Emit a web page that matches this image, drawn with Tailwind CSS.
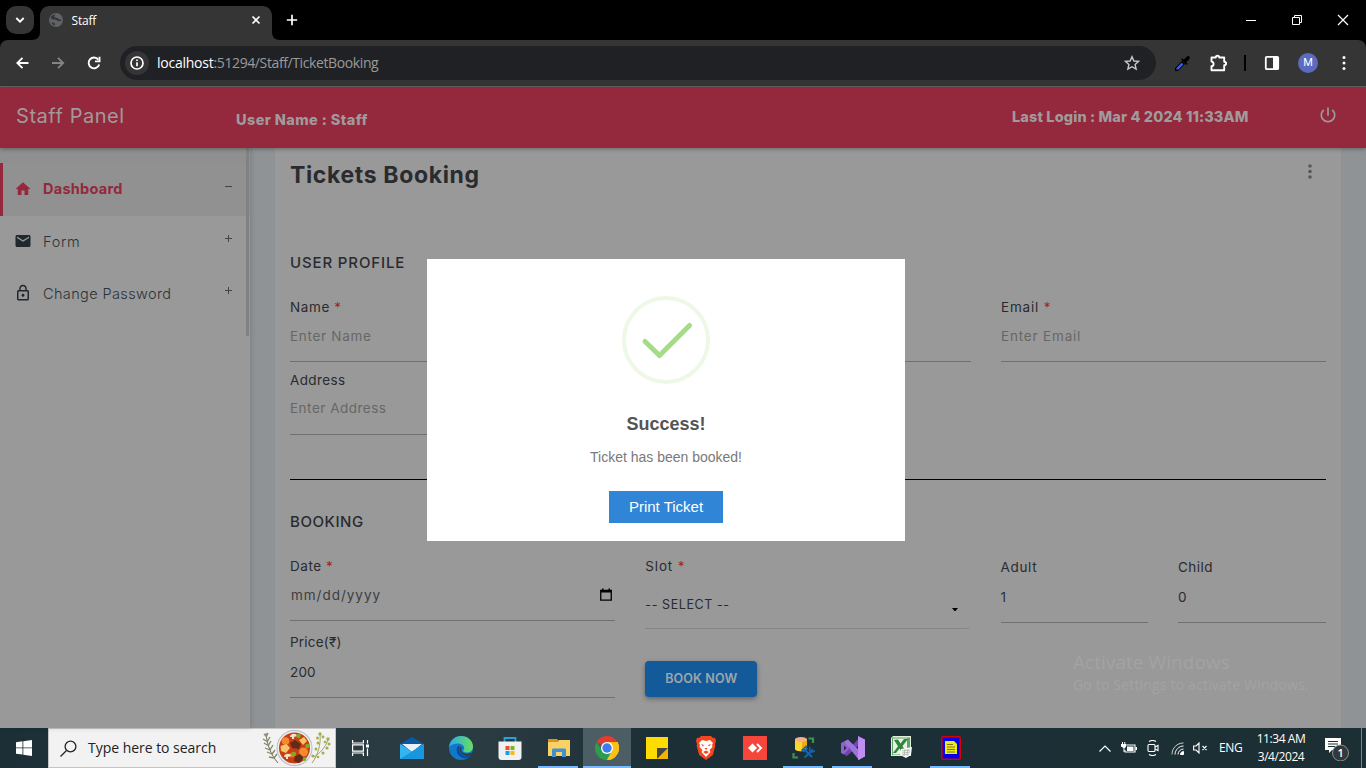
<!DOCTYPE html>
<html lang="en">
<head>
<meta charset="utf-8">
<title>Staff</title>
<script src="https://cdn.jsdelivr.net/npm/@tailwindcss/browser@4"></script>
</head>
<body class="w-[1366px] h-[768px] overflow-hidden bg-black font-['Inter',sans-serif] whitespace-nowrap">
<div class="relative flex flex-col w-[1366px] h-[768px]">

  <!-- Browser tab strip -->
  <div class="flex h-10 bg-black text-white font-['Open_Sans',sans-serif]">
    <div class="w-7 h-7 ml-1.5 mt-1.5 rounded-[10px] bg-[#353535] flex items-center justify-center">
      <svg width="10" height="8" viewBox="0 0 10 8" fill="none" stroke="#fff" stroke-width="1.8"><path d="M1.3 2 5 5.700 8.700 2"/></svg>
    </div>
    <svg class="mt-1.5 ml-[-2px]" width="248" height="34" viewBox="0 0 248 34"><path fill="#353535" d="M0 34c5 0 8-3 8-8V10C8 4 12 0 18 0h212c6 0 10 4 10 10v16c0 5 3 8 8 8z"/>
      <circle cx="24" cy="14" r="7" fill="#5f6368"/><path fill="#353535" d="M18.500 12c.5-2 2.500-3.500 5-3.500-.5 1.200-1.500 1.500-1 2.500.6 1 3 .3 3.500 1.500.3 1 2 .8 3.500 1-.2 1.500-1.500 2-3 1.500-1.500-.3-2-1.500-3.800-1.500-1.700 0-3.200-.3-4.200-1.500zM19.500 16.500c1.500 0 3.500 0 3.500 1.500 0 .8 0 1.300-.5 1.600-1.300-.4-2.300-1.400-3-3.100z"/>
      <path d="m220.500 10.500 7 7m0-7-7 7" stroke="#fff" stroke-width="1.600"/>
      <text x="39.500" y="18.500" font-size="12" fill="#fff" letter-spacing="-0.2">Staff</text></svg>
    <svg class="ml-[6px] mt-3.5" width="12" height="12" viewBox="0 0 12 12" stroke="#fff" stroke-width="1.700"><path d="M6 .8v10.400M.8 6h10.400"/></svg>
    <div class="ml-auto mt-[14px] mr-[17px] flex gap-[34px]">
      <svg width="12" height="12" viewBox="0 0 12 12"><path d="M1 6.500h10" stroke="#fff"/></svg>
      <svg width="12" height="12" viewBox="0 0 12 12" fill="none" stroke="#fff"><path d="M1.500 3.500h7v7h-7zM3.500 3.500v-2h7v7h-2"/></svg>
      <svg width="12" height="12" viewBox="0 0 12 12" stroke="#fff" stroke-width="1.200"><path d="m1 1 10 10M11 1 1 11"/></svg>
    </div>
  </div>

  <!-- Toolbar -->
  <div class="bg-black">
  <div class="flex items-center h-[47px] bg-[#353535] rounded-t-lg border-b border-[#666] font-['Open_Sans',sans-serif]">
    <svg class="ml-4" width="13" height="12" viewBox="0 0 13 12" fill="none" stroke="#fff" stroke-width="1.800"><path d="M12.500 6H1.500M6.500 .8 1.300 6l5.200 5.200"/></svg>
    <svg class="ml-[23px]" width="13" height="12" viewBox="0 0 13 12" fill="none" stroke="#858585" stroke-width="1.800"><path d="M0 6h11M6 .8 11.200 6 6 11.200"/></svg>
    <svg class="ml-[22px]" width="14" height="14" viewBox="0 0 14 14" fill="none" stroke="#fff" stroke-width="1.900"><path d="M11.300 3.600A5.400 5.400 0 1 0 12.200 8.500"/><path d="M8 5.400h4.500V.8"/></svg>
    <div class="ml-[19px] w-[1036px] h-[34px] rounded-full bg-[#202124] flex items-center">
      <div class="w-6 h-6 ml-[5px] rounded-full bg-[#353535] flex items-center justify-center">
        <svg width="14" height="14" viewBox="0 0 14 14" fill="none" stroke="#fff" stroke-width="1.700"><circle cx="7" cy="7" r="6"/><path d="M7 6.200v4M7 3.600v1.500"/></svg>
      </div>
      <div class="ml-2 text-sm leading-none text-white tracking-[-0.24px]">localhost<span class="text-[#9a9b9d] tracking-[-0.39px]">:51294/Staff/TicketBooking</span></div>
      <svg class="ml-auto mr-4" width="16" height="16" viewBox="0 0 16 16" fill="none" stroke="#c9c9c9" stroke-width="1.400"><path d="m8 1.700 1.900 4.300 4.700.4-3.500 3.100 1 4.600L8 11.700l-4.100 2.400 1-4.600-3.500-3.100 4.700-.4z"/></svg>
    </div>
    <svg class="ml-[18px]" width="17" height="17" viewBox="0 0 17 17"><path d="M1 16v-3l7-7 3 3-7 7z" fill="#000"/><path d="m2.300 14.700.4-2 5-5 1.700 1.700-5 5z" fill="#3d5fe0"/><path d="m7 4.500 1.200-1.200 1.500 1.400L13 1.400c1.500-1.500 4 .9 2.500 2.500l-3.300 3.300 1.400 1.500-1.200 1.200z" fill="#000"/></svg>
    <svg class="ml-[19px]" width="18" height="18" viewBox="0 0 18 18" fill="none" stroke="#fff" stroke-width="1.900" stroke-linejoin="round"><path d="M1.500 3.500h4.300c0-2.400 3.400-2.400 3.400 0h5v4.300c2.500 0 2.500 3.400 0 3.400v5H1.500v-4c2.800-.2 2.800-4.400 0-4.600z"/></svg>
    <div class="ml-4 w-0.5 h-4 bg-black"></div>
    <svg class="ml-[18px]" width="16" height="16" viewBox="0 0 16 16"><rect x="1.800" y="1.800" width="12.400" height="12.400" rx="1" fill="none" stroke="#fff" stroke-width="1.800"/><path d="M9 2h5v12H9z" fill="#fff"/></svg>
    <div class="ml-[18px] w-5 h-5 rounded-full bg-[#5c6bc0] text-white text-[11px] leading-5 text-center font-[Roboto,sans-serif]">M</div>
    <svg class="ml-6" width="4" height="16" viewBox="0 0 4 16" fill="#fff"><circle cx="2" cy="2.500" r="1.500"/><circle cx="2" cy="8" r="1.500"/><circle cx="2" cy="13.500" r="1.500"/></svg>
  </div>
  </div>

  <!-- App header -->
  <header class="relative z-10 flex h-[61px] bg-[#94283d] text-[#a09a9b] shadow-[0_1px_4px_rgba(0,0,0,0.35)]">
    <div class="w-[236px] pl-4 pt-[15px] text-[20px] leading-7 tracking-[0.55px]">Staff Panel</div>
    <div class="pt-[23px] text-[14.5px] leading-5 font-extrabold tracking-[0.4px]">User Name : Staff</div>
    <div class="ml-auto w-[306px] pt-5 text-[14.5px] leading-5 font-extrabold tracking-[0.12px]">Last Login : Mar 4 2024 11:33AM</div>
    <svg class="mt-[18px] mr-[28px]" width="20" height="20" viewBox="0 0 24 24" fill="currentColor"><path d="M13 3h-2v10h2V3zm4.830 2.170l-1.420 1.420C17.990 7.860 19 9.810 19 12c0 3.870-3.130 7-7 7s-7-3.130-7-7c0-2.190 1.010-4.140 2.580-5.420L6.170 5.170C4.230 6.820 3 9.260 3 12c0 4.970 4.030 9 9 9s9-4.030 9-9c0-2.740-1.230-5.180-3.170-6.830z"/></svg>
  </header>

  <!-- Page body -->
  <div class="flex h-[580px] bg-[#909395]">
    <aside class="relative w-[250px] bg-[#999] text-[#29343a] text-[14.5px] shadow-[1px_0_5px_rgba(0,0,0,0.15)]">
      <div class="h-[15px] bg-[#8f8f8f]"></div>
      <div class="flex items-center h-[53px] bg-[#919191] border-l-[3px] border-[#94283d] text-[#94283d]">
        <svg class="ml-[11px] mt-[-2px]" width="18" height="18" viewBox="0 0 24 24" fill="currentColor"><path d="M10 20v-6h4v6h5v-8h3L12 3 2 12h3v8z"/></svg>
        <span class="ml-[11px] mt-[-1px] font-bold tracking-[0.27px]">Dashboard</span>
        <span class="ml-auto mr-[18px] mb-[6px] w-[7px] h-px bg-[#444]"></span>
      </div>
      <div class="flex items-center h-[52px]">
        <svg class="ml-[14px] mt-[-2px]" width="18" height="18" viewBox="0 0 24 24" fill="#20292e"><path d="M20 4H4c-1.100 0-2 .9-2 2v12c0 1.100.9 2 2 2h16c1.100 0 2-.9 2-2V6c0-1.100-.9-2-2-2zm0 4l-8 5-8-5V6l8 5 8-5v2z"/></svg>
        <span class="ml-[11px] font-light tracking-[0.7px]">Form</span>
        <svg class="ml-auto mr-[18px] mb-[7px]" width="7" height="7" viewBox="0 0 7 7" stroke="#444"><path d="M3.500 0v7M0 3.500h7"/></svg>
      </div>
      <div class="flex items-center h-[52px]">
        <svg class="ml-[14px] mt-[-3px]" width="18" height="18" viewBox="0 0 24 24" fill="#20292e"><path d="M12 17c1.100 0 2-.9 2-2s-.9-2-2-2-2 .9-2 2 .9 2 2 2zm6-9h-1V6c0-2.760-2.240-5-5-5S7 3.240 7 6v2H6c-1.100 0-2 .9-2 2v10c0 1.100.9 2 2 2h12c1.100 0 2-.9 2-2V10c0-1.100-.9-2-2-2zM8.900 6c0-1.710 1.390-3.100 3.100-3.100s3.100 1.390 3.100 3.100v2H8.900V6zM18 20H6V10h12v10z"/></svg>
        <span class="ml-[11px] font-light tracking-[0.38px]">Change Password</span>
        <svg class="ml-auto mr-[18px] mb-[7px]" width="7" height="7" viewBox="0 0 7 7" stroke="#444"><path d="M3.500 0v7M0 3.500h7"/></svg>
      </div>
      <div class="absolute top-0 left-[246px] w-[3px] h-[188px] bg-[#818181] rounded-b"></div>
    </aside>

    <main class="ml-[25px] w-[1066px] bg-[#999] px-[15px] text-[13.5px] text-[#292b2f]">
      <div class="flex justify-between items-start h-[104px] pt-3 pr-[14px]">
        <h1 class="text-[23px] leading-[30px] font-bold tracking-[0.64px]">Tickets Booking</h1>
        <svg class="mt-[4px]" width="4" height="15" viewBox="0 0 4 15" fill="#55585b"><circle cx="2" cy="2" r="1.800"/><circle cx="2" cy="7.500" r="1.800"/><circle cx="2" cy="13" r="1.800"/></svg>
      </div>
      <h2 class="h-[45px] leading-[22px] text-[15px] font-medium tracking-[0.86px]">USER PROFILE</h2>
      <div class="grid grid-cols-[325px_325px_325px] gap-x-[30.500px]">
        <div>
          <div class="h-5 leading-5 tracking-[0.6px]">Name <span class="text-[#a41e2c]">*</span></div>
          <div class="h-[45px] leading-[39px] border-b border-[#707070] text-[#676767] tracking-[0.7px]">Enter Name</div>
        </div>
        <div>
          <div class="h-5 leading-5 tracking-[0.6px]">Mobile <span class="text-[#a41e2c]">*</span></div>
          <div class="h-[45px] leading-[39px] border-b border-[#707070] text-[#676767]">Enter Mobile</div>
        </div>
        <div>
          <div class="h-5 leading-5 tracking-[0.8px]">Email <span class="text-[#a41e2c]">*</span></div>
          <div class="h-[45px] leading-[39px] border-b border-[#707070] text-[#676767] tracking-[0.82px]">Enter Email</div>
        </div>
      </div>
      <div class="w-[325px] mt-2">
        <div class="h-5 leading-5 tracking-[0.38px]">Address</div>
        <div class="h-[45px] leading-[37px] border-b border-[#707070] text-[#676767] tracking-[0.5px]">Enter Address</div>
      </div>
      <div class="mt-11 h-px bg-black"></div>
      <h2 class="h-[76px] pt-[31px] leading-[22px] text-[15px] font-medium tracking-[0.57px]">BOOKING</h2>
      <div class="grid grid-cols-[325px_325px_147px_148px] gap-x-[30.300px]">
        <div>
          <div class="h-5 leading-[21px] tracking-[0.55px]">Date <span class="text-[#a41e2c]">*</span></div>
          <div class="flex justify-between h-[45px] leading-[39px] border-b border-[#707070] text-[#3a3d40] pl-px tracking-[0.98px]">mm/dd/yyyy
            <svg class="mt-[12px] mr-[3px]" width="12" height="13" viewBox="0 0 12 13"><path d="M.75 2.500h10.500v9.700H.75z" fill="none" stroke="#000" stroke-width="1.300"/><path d="M.5 2h11v2.500H.5zM2 .5h1.500V2H2zM8.500.5H10V2H8.500z"/></svg>
          </div>
          <div class="h-5 mt-[11px] leading-[21px] tracking-[0.22px]">Price(₹)</div>
          <div class="h-[46px] leading-[41px] border-b border-[#707070] tracking-[0.15px]">200</div>
        </div>
        <div>
          <div class="h-5 leading-[21px] tracking-[0.85px]">Slot <span class="text-[#a41e2c]">*</span></div>
          <div class="flex justify-between h-[53px] leading-[58px] text-[12.500px] border-b border-[#858585] rounded-br-sm tracking-[0.58px]">-- SELECT --
            <svg class="mt-[32px] mr-[12px]" width="6" height="3" viewBox="0 0 6 3"><path d="M0 0h6L3.500 3h-1z"/></svg>
          </div>
          <button class="mt-8 w-28 h-9 rounded-sm bg-[#125a99] text-[#a0a5a9] text-[12.500px] font-semibold tracking-[0.15px] shadow-[0_2px_5px_rgba(0,0,0,0.35)]">BOOK NOW</button>
        </div>
        <div>
          <div class="h-5 leading-[23px] tracking-[0.65px]">Adult</div>
          <div class="h-[47px] leading-[43px] border-b border-[#707070] text-[#26344f]">1</div>
        </div>
        <div>
          <div class="h-5 leading-[23px] tracking-[0.5px]">Child</div>
          <div class="h-[47px] leading-[43px] border-b border-[#707070]">0</div>
        </div>
      </div>
    </main>
  </div>

  <!-- Activation watermark -->
  <div class="absolute left-[1073px] top-[650px] text-[#a3a3a3] font-['Open_Sans',sans-serif]">
    <div class="text-[19px] leading-6 tracking-[0.05px]">Activate Windows</div>
    <div class="text-sm leading-[22px] tracking-[0.18px]">Go to Settings to activate Windows.</div>
  </div>

  <!-- Success dialog -->
  <div class="absolute left-[427px] top-[259px] w-[478px] h-[282px] bg-white flex flex-col items-center font-['Liberation_Sans',sans-serif]">
    <svg class="mt-[37px]" width="88" height="88" viewBox="0 0 88 88" fill="none"><circle cx="44" cy="44" r="42" stroke="#edf8e7" stroke-width="4"/><path d="m23 45.500 14.500 14L67.500 29.500" stroke="#a5dc86" stroke-width="5" stroke-linecap="round" stroke-linejoin="round"/></svg>
    <div class="mt-[29px] text-lg leading-[22px] font-bold text-[#545454]">Success!</div>
    <div class="mt-3 text-sm leading-5 text-[#797979]">Ticket has been booked!</div>
    <button class="mt-[24px] w-[114px] h-8 bg-[#3085d6] text-white text-[15px]">Print Ticket</button>
  </div>

  <!-- Windows taskbar -->
  <footer class="flex h-10 bg-[linear-gradient(90deg,#1c2f37_0%,#2b3b42_28%,#2b3b42_35%,#1c2f37_48%,#1c2f35_100%)] text-white font-['Open_Sans',sans-serif]">
    <div class="w-12 flex items-center justify-center"><svg width="16" height="16" viewBox="0 0 16 16" fill="#fff"><path d="M0 2.200 6.500 1.300v6.200H0zM7.300 1.200 16 0v7.500H7.300zM0 8.300h6.500v6.300L0 13.700zM7.300 8.300H16V16l-8.700-1.200z"/></svg></div>
    <div class="w-72 h-10 bg-[#f2f2f2] border border-[#c4c4c4] flex items-center text-[#222]">
      <svg class="ml-[11px]" width="17" height="17" viewBox="0 0 17 17" fill="none" stroke="#222" stroke-width="1.300"><circle cx="10.500" cy="6.500" r="5.400"/><path d="m6.500 10.500-6 6"/></svg>
      <span class="ml-[11px] text-sm tracking-[-0.03px]">Type here to search</span>
      <svg class="ml-auto mr-[2px]" width="72" height="38" viewBox="0 0 72 38">
        <path d="M5 4c1 12 5 22 12 30" fill="none" stroke="#776a4c"/>
        <path d="m6 8-3-3m4 8-5-3m6 7-5-3m6 7-5-2m7 6-5-2m7 6-5-1M5 8l2-4m-1 9 3-5m-2 9 3-5m-1 9 3-5m-1 9 3-4m-1 8 3-4" stroke="#7d8b66" stroke-width="1.300"/>
        <path d="M59 4c1 12-2 22-8 30M67 11c-3 8-8 13-14 17" fill="none" stroke="#a3a460"/>
        <g fill="#a4ae4b"><circle cx="59" cy="5" r="1.700"/><circle cx="56.500" cy="9" r="1.500"/><circle cx="62" cy="8" r="1.400"/><circle cx="57" cy="14" r="1.500"/><circle cx="55" cy="20" r="1.500"/><circle cx="67" cy="10" r="1.700"/><circle cx="68" cy="15" r="1.500"/><circle cx="64" cy="13" r="1.300"/><circle cx="66" cy="19" r="1.600"/><circle cx="62" cy="24" r="1.500"/><circle cx="57" cy="28" r="1.300"/><circle cx="52" cy="27" r="1.600"/></g>
        <circle cx="33.500" cy="19" r="18" fill="#b9bcc2"/><circle cx="33.500" cy="19" r="17" fill="#eceef1"/><circle cx="33.500" cy="19" r="15.500" fill="#c83d12"/>
        <circle cx="24.500" cy="12" r="3.800" fill="#f38a2d"/><circle cx="42.500" cy="23" r="4.500" fill="#f38a2d"/><circle cx="31" cy="26" r="2.500" fill="#ee761d"/>
        <path d="m19.500 17 6-2 3.500 4-4 5-5-2zM38 11l5-3 3 4-4 4z" fill="#f7c568"/>
        <path d="m29 14 5-3 6 4-2 5-7-1zM34 27l5-2 4 4-5 5-5-2z" fill="#622a19"/>
        <path d="M29 8c0-4 7-4 7-1l-3 1v2h-2V8zM23 28c0-4 7-4 7-1l-3 1v2h-2v-2z" fill="#efe2d2"/>
        <g fill="#79ad25"><circle cx="37.500" cy="7" r="2.300"/><circle cx="46.500" cy="17" r="2.300"/><circle cx="33" cy="25" r="2.200"/><circle cx="43.500" cy="30" r="1.900"/></g>
      </svg>
    </div>
    <div class="w-[51px] flex items-center justify-center"><svg class="mr-[3px]" width="17" height="16" viewBox="0 0 17 16" fill="none" stroke="#fff" stroke-width="1.200"><path d="M.6 0v3h10.800V0M.6 16v-3h10.800v3M.6 4.800h10.800v6.400H.6zM15.500 0v3.500M15.500 8.500V16"/><path d="M14 4.500h3v3h-3z" fill="#fff" stroke="none"/></svg></div>
    <div class="flex">
      <div class="w-[49px] flex items-center justify-center"><svg width="24" height="24" viewBox="0 0 24 24"><path d="M0 8 12 1l12 7v6H0z" fill="#0b58a5"/><path d="M2 8h20L12 16z" fill="#e9f1f8"/><path d="M0 8v15h24V8l-12 7.500z" fill="#35b5f0"/><path d="M0 23 24 8v15z" fill="#1896e0"/></svg></div>
      <div class="w-[49px] flex items-center justify-center"><svg width="24" height="24" viewBox="0 0 24 24"><defs><linearGradient id="ea"><stop stop-color="#2ba9e8"/><stop offset="1" stop-color="#68df5c"/></linearGradient></defs><circle cx="12" cy="12" r="12" fill="#1279ca"/><path d="M0 11C1 4 6 0 12 0c7 0 12 5 12 10.500 0 4-3 6-6 6-3.500 0-4.500-1.500-3.500-2.500 2-2.500-.5-6.500-5-6.500C5 7.500 1.500 9 0 11z" fill="url(#ea)"/><path d="M9 10c-3 4-1 10 5 12 3 1 6-.5 8-3-2 1-4 1.300-6 .7-4.500-1-7.500-5.500-5-10.200z" fill="#0b4d9b"/><path d="M13 11.500c-1.500 1.800-1 5 3 6 3 .8 5.500-.3 7.500-1.500-.6 1.700-1.300 2.600-2.300 3.600C15 21 9 16 10.800 11z" fill="#2b3b42"/></svg></div>
      <div class="w-[49px] flex items-center justify-center"><svg width="24" height="24" viewBox="0 0 24 24"><path d="M6.500 7V2h11v5" fill="none" stroke="#27a2dd" stroke-width="1.800"/><path d="M.5 5.500h23V21c0 2-1 3-3 3h-17c-2 0-3-1-3-3z" fill="#f1f1f1"/><path d="M7.500 10h4v4h-4z" fill="#e94f2e"/><path d="M12.500 10h4v4h-4z" fill="#7fb51a"/><path d="M7.500 15h4v4h-4z" fill="#16a0e8"/><path d="M12.500 15h4v4h-4z" fill="#fbb914"/></svg></div>
      <div class="relative w-[49px] flex items-center justify-center"><svg width="22" height="20" viewBox="0 0 22 20"><path d="M0 1h9l2 2v4H0z" fill="#d99416"/><path d="M0 4h10l1-2h11v16H0z" fill="#fad163"/><path d="M4 18v-6c0-1 .6-1.500 1.500-1.500h11c1 0 1.500.5 1.500 1.500v7h-4v-5H8v5H4z" fill="#3f92d2"/></svg><div class="absolute bottom-0 left-1 w-10 h-0.5 bg-[#76b9ff]"></div></div>
      <div class="relative w-[49px] bg-[#4d5d64] border-r border-[#1c2f37] flex items-center justify-center"><svg width="24" height="24" viewBox="0 0 24 24"><path d="M12 12 1.600 6A12 12 0 0 1 22.400 6z" fill="#e33b2e"/><path d="M12 12 22.400 6A12 12 0 0 1 12 24z" fill="#fbc116"/><path d="M12 24A12 12 0 0 1 1.600 6L7.200 15 12 12l4.800 3z" fill="#2c9d4b"/><path d="M12 6h10.400A12 12 0 0 1 12 24l5.200-9z" fill="#fbc116"/><circle cx="12" cy="12" r="6" fill="#fff"/><circle cx="12" cy="12" r="4.700" fill="#3b7ded"/></svg><div class="absolute bottom-0 left-0 w-12 h-0.5 bg-[#76b9ff]"></div></div>
      <div class="w-[49px] flex items-center justify-center"><svg width="22" height="22" viewBox="0 0 22 22"><path d="M0 0h22v11L11 22H0z" fill="#ffdc00"/><path d="M11 11h11L11 22z" fill="#444"/><path d="M22 11v11H11z" fill="#f3b400"/></svg></div>
      <div class="w-[49px] flex items-center justify-center"><svg width="20" height="24" viewBox="0 0 20 24"><path d="m5 0h10l2 2 2-.3L20 5l-1 3 .3 2-2.500 9L10 24l-6.800-5L.7 10 1 8 0 5l1-3.300L3 2z" fill="#f4451d"/><path d="m6 4 4 1 4-1 3 3-1 2 .5 2-3 3 1 2-4.500 5L5.500 16l1-2-3-3L4 9 3 7z" fill="#fff"/><path d="m5 8 3 1-1 1.500zM15 8l-3 1 1 1.500zM8.500 12h3L10 14zM7 16l3-1.500 3 1.500-3 2z" fill="#f4451d"/></svg></div>
      <div class="w-[49px] flex items-center justify-center"><svg width="24" height="24" viewBox="0 0 24 24"><path fill="#f6463b" d="M0 0h24v24H0z"/><path d="m9.500 7.500 4.500 4.500-4.500 4.500L5 12z" fill="#fff"/><path d="m13 8 4 4-4 4" fill="none" stroke="#fff" stroke-width="2" transform="translate(1)"/></svg></div>
      <div class="relative w-[49px] flex items-center justify-center"><svg width="23" height="24" viewBox="0 0 23 24"><path d="M3 3v10c0 3 12 3 12 0V3z" fill="#fcd52f"/><path d="M10 4h5v9c0 1-2 2-5 2z" fill="#e9ac12"/><ellipse cx="9" cy="3.500" rx="6" ry="2.500" fill="#f3b08a"/><path d="M16.500 2.500H21V7M6 21.500H1.500V17" fill="none" stroke="#3b944b" stroke-width="2.200"/><path d="m12 13 8 8m1-7.500-8.500 8" stroke="#1763a8" stroke-width="2.200"/><path d="m10 14 4-3.500 1 2-3 3zM18 11l-.5 3 2.500 2 3-1" fill="none" stroke="#1763a8" stroke-width="1.600"/></svg><div class="absolute bottom-0 left-1 w-10 h-0.5 bg-[#76b9ff]"></div></div>
      <div class="relative w-[49px] flex items-center justify-center"><svg width="24" height="24" viewBox="0 0 24 24"><path d="m0 7 3-1.500 5 5V14l-5 4.500L0 17zM3 9.500v5L5.500 12z" fill="#8f62cd" fill-rule="evenodd"/><path d="M3 18.500 18 2v7L6 20z" fill="#7244af"/><path d="m3 5.500 4-2L24 20l-6 4z" fill="#9e74da"/><path d="m17 0 7 3.500v17L17 24z" fill="#c18df3"/></svg><div class="absolute bottom-0 left-1 w-10 h-0.5 bg-[#76b9ff]"></div></div>
      <div class="w-[49px] flex items-center justify-center"><svg class="mb-0.5" width="23" height="22" viewBox="0 0 23 22"><path d="M3 0h18v20H1V2z" fill="#e2efdf"/><path d="M2 1.500h18V19H2z" fill="#5ea563"/><path d="M3 2.500h14v12l-8 4H3z" fill="#e8f3e5"/><path d="m4 4 4-.5 2.500 4L14 3h4l-5.500 7L16 16l-4 .5-2.500-4L6 17H3l5-6.800z" fill="#30863c"/><path d="m11 13 11-2-1 8-5 3-6-3z" fill="#f7f9f7"/><path d="m12 15 8-1m-8 3 8-1m-8 3 7-1m-4-5-1 7m4-7-1 7" stroke="#a0aaa0" stroke-width=".7"/></svg></div>
      <div class="relative w-[49px] flex items-center justify-center"><svg width="20" height="24" viewBox="0 0 20 24"><rect x=".8" y=".8" width="18.400" height="22.400" rx="1" fill="#00e" stroke="#d80000" stroke-width="1.600"/><path d="M4 5h9l3 3v10H4z" fill="#eeea18"/><path d="M6 8.500h6M6 11h8M6 13.500h8M6 16h8" stroke="#77751b"/></svg><div class="absolute bottom-0 left-1 w-10 h-0.5 bg-[#76b9ff]"></div></div>
    </div>
    <div class="ml-auto mr-1 flex items-center">
      <svg width="12" height="7" viewBox="0 0 12 7" fill="none" stroke="#fff" stroke-width="1.200"><path d="m.5 6.500 5.500-5.500 5.500 5.500"/></svg>
      <svg class="ml-[10px]" width="16" height="12" viewBox="0 0 16 12"><path d="M4 4.500V2h10v7H4V7" fill="none" stroke="#fff" stroke-width="1.100" transform="translate(0 1)"/><path d="M6 4.500h6.500V9H6zM14.500 5H16v3h-1.500zM0 2h5v2.500L3.500 6v4h-1V6L0 4.500zM1 0h1v2H1zM3.300 0h1v2h-1z" fill="#fff"/></svg>
      <svg class="ml-[10px]" width="12" height="16" viewBox="0 0 12 16" fill="none" stroke="#fff" stroke-width="1.100"><rect x="1" y="4.500" width="7" height="7" rx="1"/><path d="m8 7 3-1.500v5L8 9M2 1.500q3.500-2 7 0M2 14.500q3.500 2 7 0"/></svg>
      <svg class="ml-[12px]" width="14" height="13" viewBox="0 0 14 13" fill="none" stroke="#fff"><path d="M1 12.500C1 6 6 1 12.500 1" opacity=".75"/><path d="M4 12.500C4 8 8 4 12.500 4M7 12.500C7 9.500 9.500 7 12.500 7"/><path d="M9.500 12.500c0-2 1.500-3 3-3v3z" fill="#fff"/></svg>
      <svg class="ml-[8px]" width="15" height="12" viewBox="0 0 15 12" fill="none" stroke="#fff" stroke-width="1.100"><path d="M.6 4h2.500L6 1v10L3.100 8H.6zM9.500 4l4 4m0-4-4 4"/></svg>
      <span class="ml-[11px] w-[24px] text-xs tracking-[-0.4px]">ENG</span>
      <div class="ml-[12px] w-[52px] text-center text-xs leading-[18px]"><div class="tracking-[-0.42px]">11:34 AM</div><div class="tracking-[-0.42px]">3/4/2024</div></div>
      <svg class="ml-[17px]" width="25" height="26" viewBox="0 0 25 26"><path d="M1 3h16v12H8l-3 3v-3H1z" fill="#fff"/><path d="M4 6.500h10M4 9h10M4 11.500h7" stroke="#1c2f35"/><circle cx="16.500" cy="18" r="8" fill="#33383a" stroke="#8b8f91"/><text x="13.500" y="22" font-size="11" font-weight="600" fill="#fff">1</text></svg>
      <div class="ml-[12px] w-px h-10 bg-[#76838a]"></div>
    </div>
  </footer>
</div>
</body>
</html>
